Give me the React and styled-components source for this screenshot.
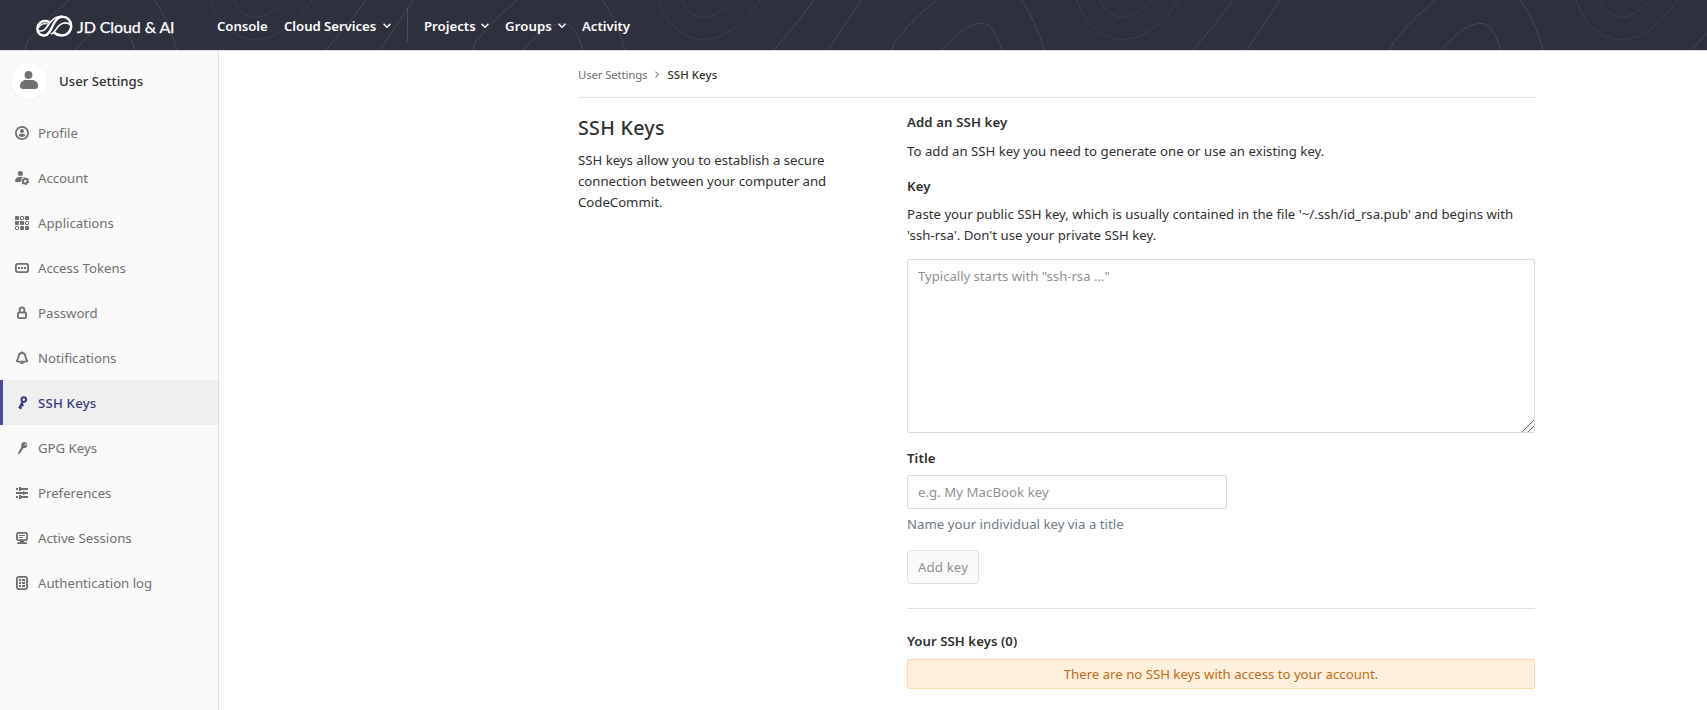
import React from "react";
import styled, { createGlobalStyle, css } from "styled-components";

const GlobalStyle = createGlobalStyle`
  * { box-sizing: border-box; }
  body {
    margin: 0;
    background: #fff;
    color: #303030;
    font-family: "Noto Sans", "Open Sans", sans-serif;
    font-size: 13.2px;
    line-height: 21px;
    overflow: hidden;
  }
`;

const Page = styled.div`
  display: flex;
  flex-direction: column;
  height: 710px;
`;

const Header = styled.header`
  position: relative;
  display: flex;
  align-items: center;
  flex: none;
  height: 51px;
  padding: 0 0 0 36px;
  background: #2e303d;
  border-bottom: 1px solid #dfdfdf;
  color: #fff;
`;

const Contours = styled.svg`
  position: absolute;
  inset: 0;
  width: 100%;
  height: 50px;
  fill: none;
  stroke: #484a56;
  stroke-width: 0.9;
`;

const Brand = styled.a`
  position: relative;
  display: flex;
  align-items: center;
  gap: 4px;
  width: 181px;
  padding-top: 2px;
`;

const BrandName = styled.span`
  font-family: Lato, sans-serif;
  font-size: 16px;
  letter-spacing: -0.1px;
  -webkit-text-stroke: 0.25px #fff;
  white-space: nowrap;
`;

const Nav = styled.nav`
  position: relative;
  display: flex;
  align-items: center;
`;

const NavItem = styled.a`
  display: flex;
  align-items: center;
  justify-content: space-between;
  width: ${(p) => p.$width}px;
  margin-right: 16px;
  padding-top: 2px;
  font-weight: 600;
  letter-spacing: ${(p) => p.$tracking || "-0.05px"};
  white-space: nowrap;
`;

const NavDivider = styled.span`
  width: 1px;
  height: 34px;
  margin-right: 16px;
  background: #4c4e5b;
`;

const Body = styled.div`
  display: flex;
  flex: 1;
  min-height: 0;
`;

const Sidebar = styled.aside`
  flex: none;
  width: 219px;
  background: #fafafa;
  border-right: 1px solid #e1e1e1;
`;

const Context = styled.div`
  display: flex;
  align-items: center;
  gap: 11px;
  height: 59px;
  padding-left: 10px;
  color: #303030;
  font-weight: 500;
`;

const ContextName = styled.span`
  padding-top: 2px;
`;

const Avatar = styled.span`
  display: flex;
  align-items: center;
  justify-content: center;
  width: 38px;
  height: 38px;
  padding-bottom: 1px;
  border: 1px solid #f2f2f2;
  border-radius: 50%;
  background: #fff;
  color: #707070;
`;

const MenuItem = styled.a`
  display: flex;
  align-items: center;
  gap: 8px;
  height: 45px;
  padding: 1px 0 0 14px;
  color: #707070;
  white-space: nowrap;
  ${(p) =>
    p.$active &&
    css`
      margin-right: -1px;
      background: #efefef;
      border-right: 1px solid #dadada;
      box-shadow: inset 3px 0 0 #4b4ba3;
      color: #393982;
      font-weight: 500;
      letter-spacing: 0.2px;
    `}
`;

const Main = styled.main`
  width: 957px;
  margin-left: 359px;
`;

const Breadcrumbs = styled.div`
  display: flex;
  align-items: center;
  gap: 8px;
  height: 47px;
  padding-top: 1px;
  border-bottom: 1px solid #e3e3e3;
  font-size: 11.4px;
  color: #707070;
`;

const Crumb = styled.span`
  color: ${(p) => (p.$current ? "#303030" : "#707070")};
  font-weight: ${(p) => (p.$current ? 500 : 400)};
  letter-spacing: ${(p) => (p.$current ? "0.1px" : "-0.14px")};
`;

const Columns = styled.div`
  display: flex;
`;

const Intro = styled.section`
  width: 329px;
  padding-top: 16px;
`;

const PageTitle = styled.h1`
  margin: 0 0 8px;
  font-size: 19.6px;
  letter-spacing: 0.3px;
  line-height: 28px;
  font-weight: 500;
`;

const Text = styled.p`
  margin: 0 0 ${(p) => p.$gap || 0}px;
  color: ${(p) => (p.$muted ? "#707a85" : "#303030")};
  letter-spacing: ${(p) => p.$tracking || "0.02px"};
  white-space: nowrap;
`;

const Content = styled.section`
  width: 628px;
  padding-top: 14px;
`;

const Label = styled.h2`
  margin: 0 0 ${(p) => p.$gap || 0}px;
  font-size: 13.2px;
  line-height: 21px;
  font-weight: 600;
  letter-spacing: ${(p) => p.$tracking || "0.1px"};
`;

const field = css`
  display: block;
  border: 1px solid #dbdbdb;
  border-radius: 2px;
  background: #fff;
  padding: 6px 10px;
  font: inherit;
  outline: none;
  &::placeholder { color: #919191; opacity: 1; }
`;

const KeyArea = styled.div`
  position: relative;
  margin-bottom: 15px;
`;

const KeyField = styled.textarea`
  ${field}
  width: 628px;
  height: 174px;
  letter-spacing: -0.04px;
  resize: none;
`;

const Grip = styled.svg`
  position: absolute;
  right: 1px;
  bottom: 1px;
  width: 12px;
  height: 12px;
  fill: none;
  stroke: #555;
  stroke-width: 0.9;
`;

const TitleField = styled.input`
  ${field}
  width: 320px;
  height: 34px;
  margin-bottom: 5px;
  letter-spacing: 0.05px;
`;

const AddButton = styled.button`
  display: block;
  width: 72px;
  height: 34px;
  margin-bottom: 24px;
  padding: 0;
  border: 1px solid #e0e0e0;
  border-radius: 3px;
  background: #fafafa;
  color: #919191;
  font: inherit;
  letter-spacing: 0.15px;
`;

const Rule = styled.hr`
  height: 1px;
  margin: 0 0 22px;
  border: 0;
  background: #dfdfdf;
`;

const Notice = styled.div`
  height: 30px;
  border: 1px solid #fdd9a7;
  border-radius: 2px;
  background: #fff0dd;
  color: #c26a18;
  line-height: 28px;
  text-align: center;
`;

const Glyph = styled.svg`
  flex: none;
  width: 16px;
  height: 16px;
  fill: currentColor;
`;

const strokeProps = { fill: "none", stroke: "currentColor" };

const glyphs = {
  profile: (
    <>
      <circle cx="8" cy="8" r="6.1" strokeWidth="1.8" {...strokeProps} />
      <circle cx="8" cy="6" r="2" />
      <path d="M4.8 10.6c0-1.2 1-1.8 2-1.8h2.4c1 0 2 .6 2 1.8 0 .8-1.6 1.3-3.2 1.3s-3.2-.5-3.2-1.3z" />
    </>
  ),
  account: (
    <>
      <circle cx="6.4" cy="3.6" r="2.5" />
      <path d="M1 11.2C1 8.500 3 7 5.200 7h2.300c.6 0 1 .1 1.500.3-1.600.7-2.600 2.500-2.100 4.700H2c-.6 0-1-.3-1-.8z" />
      <circle cx="11.200" cy="11.200" r="2.200" strokeWidth="1.900" {...strokeProps} />
      <circle cx="11.200" cy="11.200" r="3.400" strokeWidth="1.300" strokeDasharray="1.780 1.780" {...strokeProps} />
    </>
  ),
  applications: (
    <>
      {[0, 1, 2].map((r) =>
        [0, 1, 2].map((c) => {
          const open = (r === 0 && c === 1) || (r === 1 && c === 2) || (r === 2 && c === 0);
          return open ? (
            <rect key={`${r}${c}`} x={1.5 + c * 5} y={1.5 + r * 5} width="3" height="3" rx=".4" strokeWidth="1" {...strokeProps} />
          ) : (
            <rect key={`${r}${c}`} x={1 + c * 5} y={1 + r * 5} width="4" height="4" rx=".8" />
          );
        })
      )}
    </>
  ),
  token: (
    <>
      <rect x="1.900" y="3.900" width="12.200" height="8.200" rx="1.800" strokeWidth="1.800" {...strokeProps} />
      <path d="M4 7h2v2H4zM7 7h2v2H7zM10 7h2v2h-2z" />
    </>
  ),
  lock: (
    <>
      <rect x="3.900" y="7.500" width="8.200" height="5.600" rx="1.300" strokeWidth="1.900" {...strokeProps} />
      <path d="M5.700 7V4.800a2.300 2.300 0 0 1 4.600 0V7" strokeWidth="1.800" {...strokeProps} />
    </>
  ),
  bell: (
    <>
      <path d="M8 3C5.700 3 4.700 4.700 4.500 6.700c-.2 2-.6 2.600-1.400 3.600-.4.600-.1 1.300.6 1.300h8.600c.7 0 1-.7.6-1.300-.8-1-1.200-1.600-1.400-3.600C11.300 4.700 10.300 3 8 3z" strokeWidth="1.800" {...strokeProps} />
      <path d="M7 1.500h2V3H7zM6 12.500h4c0 2-4 2-4 0z" />
    </>
  ),
  key: (
    <>
      <circle cx="9.800" cy="4.600" r="2.300" strokeWidth="2" {...strokeProps} />
      <path d="M8.700 6.700 5.200 13.300M6.900 9.300l2.600 1.500M5 12l2.600 1.500" strokeWidth="2.200" {...strokeProps} />
    </>
  ),
  keySolid: (
    <path fillRule="evenodd" d="M10.600 2a3.100 3.100 0 0 0-3.300 2.700c-.1.700 0 1.300.2 1.900L4 13.100c-.3.700.8 1.300 1.300.8l4.100-5.600c1.900.3 3.800-1.100 3.900-3C13.400 3.500 12.200 2.100 10.600 2zm1 1.700a.9.900 0 1 1 0 1.800.9.900 0 0 1 0-1.800z" />
  ),
  sliders: (
    <path d="M2 3h2v2H2zM5 2h2v1h7v2H7v1H5zM2 7h7V6l2.800 1H14v2h-2.200L9 10V9H2zM2 11h2v2H2zM5 10h2v1h7v2H7v1H5z" />
  ),
  monitor: (
    <>
      <rect x="2.900" y="2.900" width="10.200" height="7.200" rx="1.400" strokeWidth="1.800" {...strokeProps} />
      <path d="M5 5h6v1H5zM5 7h4v1H5zM6 11h4v1h1c1.300 0 2 .7 2 2H3c0-1.300.7-2 2-2h1z" />
    </>
  ),
  log: (
    <>
      <rect x="2.900" y="1.900" width="10.200" height="12.200" rx="2" strokeWidth="1.800" {...strokeProps} />
      <path d="M5 4h2v2H5zM8 4h3v2H8zM5 7h2v2H5zM8 7h3v2H8zM5 10h2v2H5zM8 10h3v2H8z" />
    </>
  ),
};

const menu = [
  ["profile", "Profile"],
  ["account", "Account"],
  ["applications", "Applications"],
  ["token", "Access Tokens"],
  ["lock", "Password"],
  ["bell", "Notifications"],
  ["key", "SSH Keys"],
  ["keySolid", "GPG Keys"],
  ["sliders", "Preferences"],
  ["monitor", "Active Sessions"],
  ["log", "Authentication log"],
];

const Chevron = () => (
  <svg width="8" height="6" viewBox="0 0 8 6" fill="none" stroke="#fff" strokeWidth="1.5" strokeLinecap="round">
    <path d="M1 1.200 4 4.200 7 1.200" />
  </svg>
);

const HeaderContours = () => (
  <Contours aria-hidden="true">
    {[255, 703, 1122, 1621].map((x) => (
      <g key={x} transform={`translate(${x} 0)`}>
        <path d="M-230 50C-229 45-228 42-225 39Q-203 13-185 0M-101 0Q-87 18-78 50" />
        <path d="M-180 50C-166 34-152 23-139 23.500C-131 24-126 33-120 50" />
        <path opacity=".65" d="M-45 0C-37 25-20 39 0 39.500C22 39 38 26 57 0M-22 0C-16 12-8 17 0 17.500C11 17 20 10 29 0" />
        <path d="M71 50Q91 28 111 0M125 50L154 6Q157 3 157 0" />
      </g>
    ))}
  </Contours>
);

const Logo = () => (
  <svg width="37" height="23" viewBox="0 0 37 23" fill="none" stroke="#fff">
    <path strokeWidth="2.500" d="M13.500 7.200C6.500 4 1.400 8.500 1.400 13.800C1.400 18 4.500 20.700 8.500 20.500C16.500 20 16 2.400 26 1.800C31.500 1.600 35.200 5.800 35.200 11C35.200 16.800 30.500 20.600 25.500 20.500C22 20.400 19.500 19 17.500 16.800" />
    <path strokeWidth="1.600" d="M2.500 15.800C9 17.500 11 11 14.500 7C17.500 3.200 21 1.200 25.500 1.200M15 19.200C19.500 18 20 12.200 24.500 9.400C28 7.300 32 7.800 34.800 10" />
    <path strokeWidth="1.200" d="M2.500 12.800C4.500 8.800 8 7.800 12.500 9" />
  </svg>
);

export default function App() {
  return (
    <Page>
      <GlobalStyle />
      <Header>
        <HeaderContours />
        <Brand>
          <Logo />
          <BrandName>JD Cloud &amp; AI</BrandName>
        </Brand>
        <Nav>
          <NavItem $width={51}>Console</NavItem>
          <NavItem $width={107}>Cloud Services <Chevron /></NavItem>
          <NavDivider />
          <NavItem $width={65} $tracking="0">Projects <Chevron /></NavItem>
          <NavItem $width={61} $tracking="0.1px">Groups <Chevron /></NavItem>
          <NavItem $width={48} $tracking="0">Activity</NavItem>
        </Nav>
      </Header>
      <Body>
        <Sidebar>
          <Context>
            <Avatar>
              <svg width="18" height="18" viewBox="0 0 18 18" fill="currentColor">
                <circle cx="8.500" cy="3.900" r="3.900" />
                <path d="M0 15c0-3.500 2.500-6 6-6h6c3.500 0 6 2.500 6 6 0 2-1 3-3 3H3c-2 0-3-1-3-3z" />
              </svg>
            </Avatar>
            <ContextName>User Settings</ContextName>
          </Context>
          {menu.map(([icon, label]) => (
            <MenuItem key={label} $active={label === "SSH Keys"}>
              <Glyph viewBox="0 0 16 16">{glyphs[icon]}</Glyph>
              {label}
            </MenuItem>
          ))}
        </Sidebar>
        <Main>
          <Breadcrumbs>
            <Crumb>User Settings</Crumb>
            <svg width="4" height="7" viewBox="0 0 4 7" fill="none" stroke="#8a8a8a" strokeWidth="1.200">
              <path d="M.5 .7 3.300 3.500 .5 6.300" />
            </svg>
            <Crumb $current>SSH Keys</Crumb>
          </Breadcrumbs>
          <Columns>
            <Intro>
              <PageTitle>SSH Keys</PageTitle>
              <Text $tracking="-0.01px">
                SSH keys allow you to establish a secure<br />
                connection between your computer and<br />
                CodeCommit.
              </Text>
            </Intro>
            <Content>
              <Label $gap={8} $tracking="0.12px">Add an SSH key</Label>
              <Text $gap={14}>To add an SSH key you need to generate one or use an existing key.</Text>
              <Label $gap={7}>Key</Label>
              <Text $gap={13} $tracking="0.01px">
                Paste your public SSH key, which is usually contained in the file '~/.ssh/id_rsa.pub' and begins with<br />
                'ssh-rsa'. Don't use your private SSH key.
              </Text>
              <KeyArea>
                <KeyField placeholder={'Typically starts with "ssh-rsa ..."'} />
                <Grip viewBox="0 0 12 12">
                  <path d="M0 12 12 0M6 12 12 6" />
                </Grip>
              </KeyArea>
              <Label $gap={6}>Title</Label>
              <TitleField placeholder="e.g. My MacBook key" />
              <Text $muted $gap={15}>Name your individual key via a title</Text>
              <AddButton disabled>Add key</AddButton>
              <Rule />
              <Label $gap={7} $tracking="0.05px">Your SSH keys (0)</Label>
              <Notice>There are no SSH keys with access to your account.</Notice>
            </Content>
          </Columns>
        </Main>
      </Body>
    </Page>
  );
}
